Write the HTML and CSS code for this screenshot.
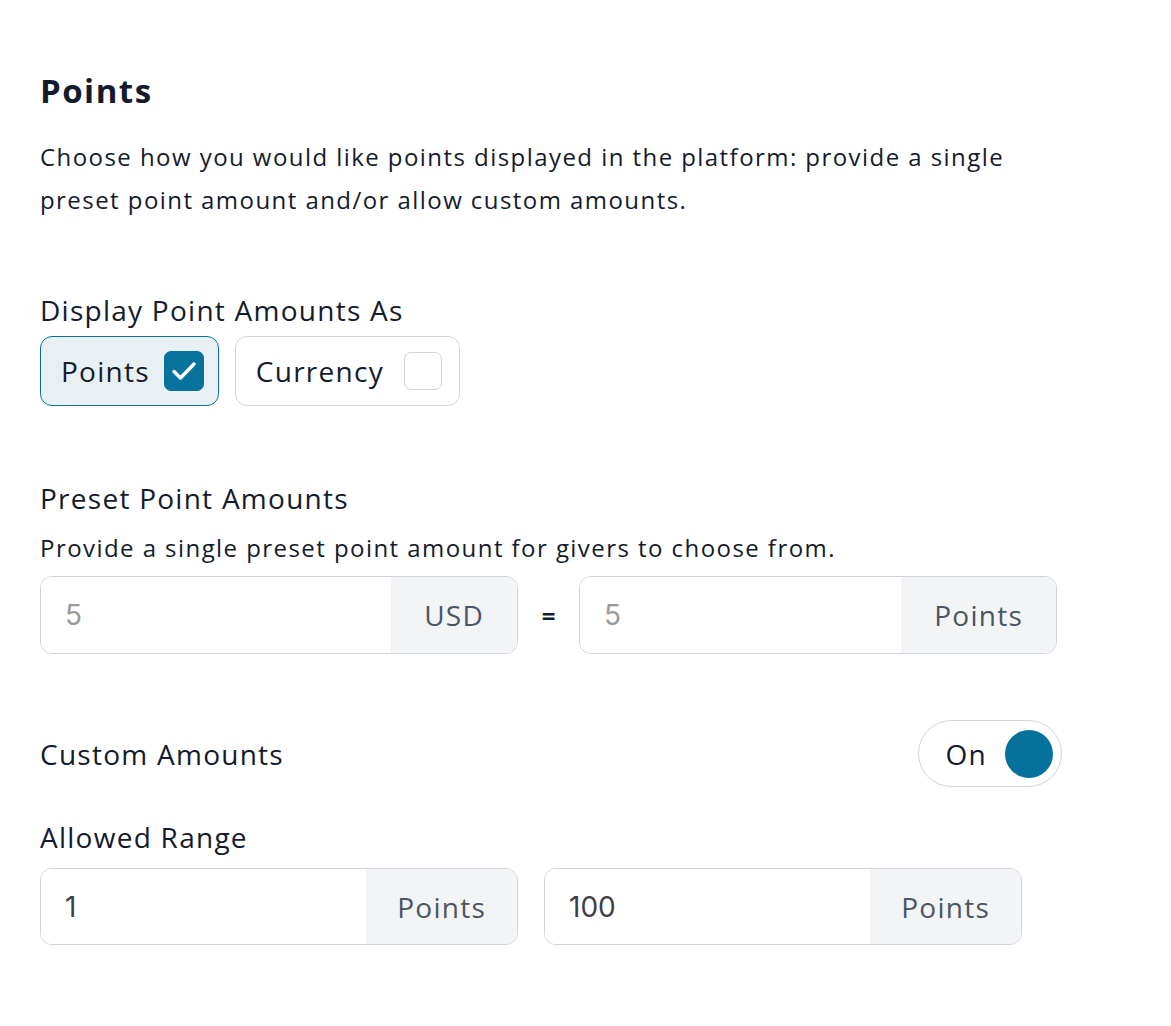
FILE: index.html
```html
<!DOCTYPE html>
<html lang="en">
<head>
    <meta charset="UTF-8">
    <meta name="viewport" content="width=device-width, initial-scale=1.0">
    <title>Points</title>
    <link rel="stylesheet" href="styles.css">
</head>
<body>
    <div class="settings">
        <h1 class="title">Points</h1>
        <p class="intro">Choose how you would like points displayed in the platform: provide a single preset point amount and/or allow custom amounts.</p>

        <h2 class="label label-display">Display Point Amounts As</h2>
        <div class="chips">
            <button class="chip chip-active">
                <span>Points</span>
                <span class="check check-on">
                    <svg width="30" height="30" viewBox="0 0 30 30"><path d="M5 15.5l6.5 6.5L25 8" fill="none" stroke="#fff" stroke-width="3.4" stroke-linecap="round" stroke-linejoin="round"/></svg>
                </span>
            </button>
            <button class="chip">
                <span>Currency</span>
                <span class="check"></span>
            </button>
        </div>

        <h2 class="label label-preset">Preset Point Amounts</h2>
        <p class="hint">Provide a single preset point amount for givers to choose from.</p>
        <div class="row row-preset">
            <div class="group">
                <input class="field" type="text" placeholder="5">
                <span class="addon">USD</span>
            </div>
            <span class="equals">=</span>
            <div class="group">
                <input class="field" type="text" placeholder="5">
                <span class="addon">Points</span>
            </div>
        </div>

        <div class="custom">
            <h2 class="label">Custom Amounts</h2>
            <button class="toggle">
                <span>On</span>
                <span class="knob"></span>
            </button>
        </div>

        <h2 class="label label-range">Allowed Range</h2>
        <div class="row row-range">
            <div class="group">
                <input class="field" type="text" value="1">
                <span class="addon">Points</span>
            </div>
            <div class="group">
                <input class="field" type="text" value="100">
                <span class="addon">Points</span>
            </div>
        </div>
    </div>
</body>
</html>
```

FILE: styles.css
```css
body {
    margin: 0;
    background: #fff;
    color: #141b2d;
    font-family: "Open Sans", Lato, sans-serif;
}
.settings {
    width: 1022px;
    padding: 71px 0 60px 40px;
}
.title {
    margin: 0;
    font-size: 33px;
    line-height: 40px;
    font-weight: 700;
    letter-spacing: 0.045em;
}
.intro {
    margin: 24px 0 0;
    width: 1000px;
    font-size: 24px;
    line-height: 43px;
    letter-spacing: 0.06em;
}
.label {
    margin: 0;
    font-size: 28px;
    line-height: 36px;
    font-weight: 400;
    letter-spacing: 0.045em;
}
.label-display {
    margin-top: 71px;
}
.chips {
    display: flex;
    gap: 16px;
    margin-top: 8px;
}
.chip {
    display: flex;
    align-items: center;
    gap: 14px;
    height: 70px;
    padding: 0 14px 0 20px;
    border: 1.5px solid #d1d5db;
    border-radius: 12px;
    background: #fff;
    color: #141b2d;
    font-family: inherit;
    font-size: 28px;
    letter-spacing: 0.045em;
}
.chip-active {
    background: #e9f0f3;
    border-color: #0a7199;
}
.check {
    display: flex;
    align-items: center;
    justify-content: center;
    width: 38px;
    height: 38px;
    margin: 0 3px 0 6px;
    border: 1.5px solid #d1d5db;
    border-radius: 7px;
    box-sizing: border-box;
}
.check-on {
    width: 40px;
    height: 40px;
    margin: 0;
    background: #07729c;
    border-color: #07729c;
}
.label-preset {
    margin-top: 74px;
}
.hint {
    margin: 17px 0 0;
    font-size: 24px;
    line-height: 30px;
    letter-spacing: 0.06em;
}
.row {
    display: flex;
    align-items: center;
    margin-top: 13px;
}
.row-range {
    gap: 26px;
}
.group {
    display: flex;
    width: 478px;
    height: 78px;
    border: 1.5px solid #d1d5db;
    border-radius: 12px;
    box-sizing: border-box;
    overflow: hidden;
}
.row-range .group {
    height: 77px;
}
.field {
    flex: 1;
    min-width: 0;
    border: none;
    outline: none;
    padding: 0 24px;
    font-family: Inter, sans-serif;
    font-size: 28px;
    color: #3f3f46;
    background: #fff;
}
.field::placeholder {
    color: #9a9a9a;
}
.addon {
    display: flex;
    align-items: center;
    padding: 0 31px;
    background: #f3f4f6;
    color: #4b5563;
    font-size: 28px;
    letter-spacing: 0.045em;
}
.row-preset .addon {
    padding: 0 33px;
}
.equals {
    width: 61px;
    text-align: center;
    font-size: 24px;
    font-weight: 700;
}
.custom {
    display: flex;
    align-items: center;
    justify-content: space-between;
    margin-top: 66px;
}
.toggle {
    display: flex;
    align-items: center;
    gap: 18px;
    height: 67px;
    padding: 0 8px 0 27px;
    border: 1.5px solid #d1d5db;
    border-radius: 34px;
    background: #fff;
    color: #141b2d;
    font-family: inherit;
    font-size: 28px;
    letter-spacing: 0.045em;
}
.knob {
    width: 48px;
    height: 48px;
    border-radius: 50%;
    background: #06729c;
}
.label-range {
    margin-top: 32px;
}
```
